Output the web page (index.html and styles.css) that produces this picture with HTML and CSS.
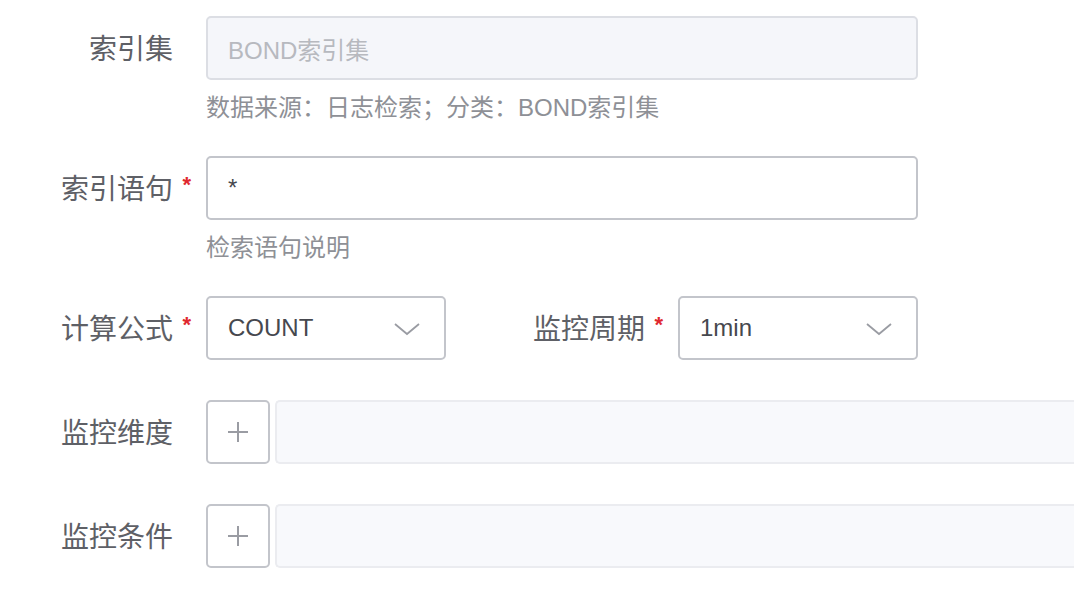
FILE: index.html
```html
<!DOCTYPE html>
<html lang="zh-CN">
<head>
<meta charset="utf-8">
<link rel="stylesheet" href="styles.css">
</head>
<body>
<form class="form">
  <div class="item has-help">
    <div class="row">
      <label class="label"><span>索引集</span></label>
      <div class="control">
        <div class="input disabled"><span class="placeholder">BOND索引集</span></div>
        <div class="help">数据来源：日志检索；分类：BOND索引集</div>
      </div>
    </div>
  </div>
  <div class="item has-help">
    <div class="row">
      <label class="label required"><span>索引语句</span></label>
      <div class="control">
        <div class="input"><span class="value">*</span></div>
        <div class="help">检索语句说明</div>
      </div>
    </div>
  </div>
  <div class="item">
    <div class="row">
      <label class="label required"><span>计算公式</span></label>
      <div class="select"><span class="value">COUNT</span>
        <svg class="chev" width="26" height="14" viewBox="0 0 26 14"><polyline points="1,2 13,12 25,2" fill="none" stroke="#9a9ca3" stroke-width="1.8"/></svg>
      </div>
      <label class="label required mid"><span>监控周期</span></label>
      <div class="select"><span class="value">1min</span>
        <svg class="chev" width="26" height="14" viewBox="0 0 26 14"><polyline points="1,2 13,12 25,2" fill="none" stroke="#9a9ca3" stroke-width="1.8"/></svg>
      </div>
    </div>
  </div>
  <div class="item">
    <div class="row">
      <label class="label"><span>监控维度</span></label>
      <button type="button" class="add"><svg width="22" height="22" viewBox="0 0 22 22"><path d="M11 1V21M1 11H21" stroke="#9a9ca3" stroke-width="2"/></svg></button>
      <div class="tagbox"></div>
    </div>
  </div>
  <div class="item">
    <div class="row">
      <label class="label"><span>监控条件</span></label>
      <button type="button" class="add"><svg width="22" height="22" viewBox="0 0 22 22"><path d="M11 1V21M1 11H21" stroke="#9a9ca3" stroke-width="2"/></svg></button>
      <div class="tagbox"></div>
    </div>
  </div>
</form>
</body>
</html>
```
FILE: styles.css
```css
html, body {
  margin: 0;
  padding: 0;
  background: #ffffff;
  overflow: hidden;
}
body {
  width: 1074px;
  height: 592px;
  font-family: "Liberation Sans", "Noto Sans CJK SC", sans-serif;
}
.form {
  padding-top: 16px;
}
.item {
  margin-bottom: 40px;
}
.item.has-help {
  margin-bottom: 28px;
}
.row {
  display: flex;
  align-items: flex-start;
}
.label {
  position: relative;
  width: 206px;
  flex: 0 0 206px;
  box-sizing: border-box;
  padding-right: 33px;
  padding-bottom: 3px;
  height: 64px;
  display: flex;
  align-items: center;
  justify-content: flex-end;
  font-family: "Noto Sans CJK SC", sans-serif;
  font-size: 28px;
  line-height: 1;
  color: #5e6066;
}
.label.mid {
  width: 232px;
  flex-basis: 232px;
}
.label.required::after {
  content: "*";
  position: absolute;
  right: 15px;
  top: 18px;
  font-family: "Liberation Sans", sans-serif;
  font-size: 22px;
  font-weight: bold;
  color: #e0282e;
}
.control {
  display: flex;
  flex-direction: column;
}
.input {
  width: 712px;
  height: 64px;
  box-sizing: border-box;
  border: 2px solid #c3c5cb;
  border-radius: 5px;
  padding: 0 20px;
  display: flex;
  align-items: center;
  font-size: 24px;
  background: #fff;
}
.input.disabled {
  background: #f5f6fa;
  border-color: #dcdee4;
}
.placeholder {
  color: #b7b9bf;
}
.value {
  color: #46484e;
}
.help {
  margin-top: 8px;
  line-height: 40px;
  font-size: 24px;
  color: #8e9096;
}
.select {
  width: 240px;
  height: 64px;
  box-sizing: border-box;
  border: 2px solid #c3c5cb;
  border-radius: 5px;
  padding: 0 24px 0 20px;
  display: flex;
  align-items: center;
  justify-content: space-between;
  font-size: 24px;
}
.chev {
  display: block;
  margin-top: 2px;
}
.add {
  width: 64px;
  height: 64px;
  flex: 0 0 64px;
  box-sizing: border-box;
  border: 2px solid #c3c5cb;
  border-radius: 5px;
  background: #fff;
  padding: 0;
  display: flex;
  align-items: center;
  justify-content: center;
  margin-right: 5px;
}
.tagbox {
  flex: 1 1 auto;
  height: 64px;
  box-sizing: border-box;
  border: 2px solid #ebecf0;
  border-right: 0;
  border-radius: 5px 0 0 5px;
  background: #f8f9fc;
}
```
